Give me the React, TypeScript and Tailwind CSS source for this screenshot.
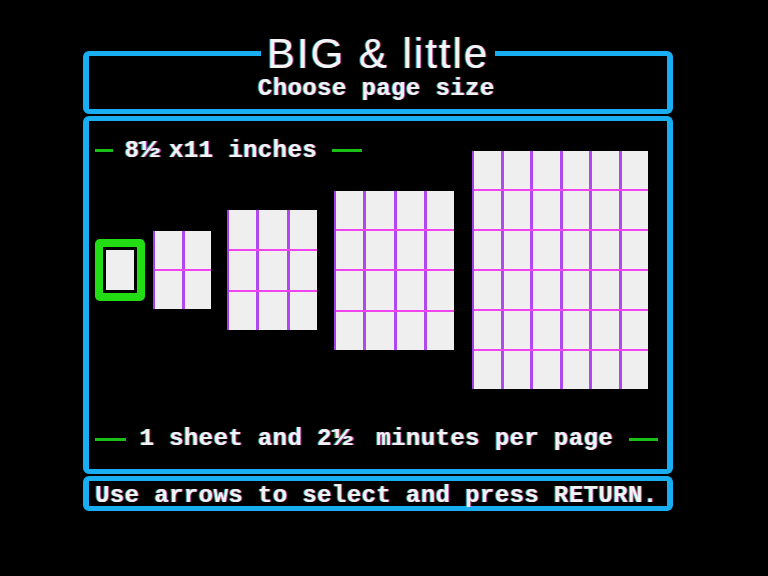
import { Fragment } from 'react';

// apple ii style text row: 14.8px per cell
const monoText =
    "font-['Liberation_Mono','DejaVu_Sans_Mono',monospace] font-bold text-[24px] leading-[19.2px] tracking-[0.4px] text-[#f2f2f2] whitespace-pre [text-shadow:1px_0_0_rgba(190,80,255,0.75),-1px_0_0_rgba(90,220,90,0.55)]";

// the ½ glyph takes two cells on this screen
const Half = () => (
    <span className="inline-block w-[29.6px]">
        <span className="inline-block origin-left scale-x-[1.45]">½</span>
    </span>
);

const Dash = ({ className }: { className: string }) => <div className={`h-[3px] bg-[#18c018] ${className}`} />;

const PageGrid = ({ cols, rows, className }: { cols: number; rows: number; className: string }) => (
    <div className={`flex flex-col border-l-2 border-[#a040e8] bg-[#efefef] shrink-0 ${className}`}>
        {Array.from({ length: rows }).map((_, r) => (
            <Fragment key={r}>
                {r > 0 && <div className="h-[2px] bg-[#f044f0]" />}
                <div className="flex flex-1">
                    {Array.from({ length: cols }).map((_, c) => (
                        <Fragment key={c}>
                            {c > 0 && <div className="w-[3px] bg-[#b048f0]" />}
                            <div className="flex-1 bg-[#efefef]" />
                        </Fragment>
                    ))}
                </div>
            </Fragment>
        ))}
    </div>
);

const App = () => {
    return (
        <div className="min-h-screen w-full bg-black pt-[32px]">
            <div className="ml-[83px] w-[590px] flex flex-col gap-[2px]">
                {/* title box */}
                <fieldset className="border-x-[6px] border-y-[5px] border-[#19aef2] rounded-[6px] pb-[11px]">
                    <legend className="mx-auto px-[6px] font-['Liberation_Sans',Arial,sans-serif] text-[42px] leading-[43px] tracking-[2px] text-[#f4f4f4] [text-shadow:1px_0_0_rgba(190,80,255,0.7),-1px_0_0_rgba(90,220,90,0.5)]">
                        BIG &amp; little
                    </legend>
                    <div className={`${monoText} mt-[4px] pl-[6px]`}>{'           Choose page size'}</div>
                </fieldset>

                {/* sizes */}
                <div className="h-[358px] border-x-[6px] border-y-[5px] border-[#19aef2] rounded-[6px] pt-[20px] flex flex-col">
                    <div className="flex items-center pl-[6px]">
                        <Dash className="w-[18px]" />
                        <div className={`${monoText} ml-[11.6px]`}>
                            8<Half />x11 inches
                        </div>
                        <Dash className="w-[30px] ml-[15px]" />
                    </div>

                    <div className="h-[220px] flex items-center pl-[6px]">
                        <div className="shrink-0 border-[8px] border-[#22dd14] rounded-[5px] bg-black p-[3px]">
                            <div className="w-[28px] h-[40px] bg-[#efefef]" />
                        </div>
                        <PageGrid cols={2} rows={2} className="ml-[8px] w-[58px] h-[78px]" />
                        <PageGrid cols={3} rows={3} className="ml-[16px] w-[90px] h-[120px]" />
                        <PageGrid cols={4} rows={4} className="ml-[17px] w-[120px] h-[159px]" />
                        <PageGrid cols={6} rows={6} className="ml-[18px] w-[176px] h-[238px]" />
                    </div>

                    <div className="flex items-center pl-[6px] mt-[49px]">
                        <Dash className="w-[31px]" />
                        <div className={`${monoText} ml-[13.4px]`}>
                            1 sheet and 2<Half /> minutes per page
                        </div>
                        <Dash className="w-[29px] ml-[16px]" />
                    </div>
                </div>

                {/* hint */}
                <div className="h-[35px] border-x-[6px] border-y-[5px] border-[#19aef2] rounded-[6px] pl-[6px] pt-[5px]">
                    <div className={monoText}>Use arrows to select and press RETURN.</div>
                </div>
            </div>
        </div>
    );
};

export default App;
